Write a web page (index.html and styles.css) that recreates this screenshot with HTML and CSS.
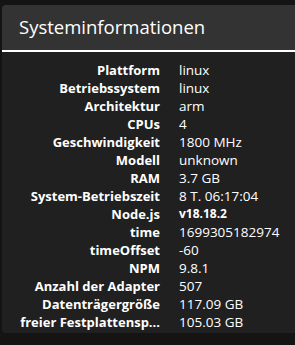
FILE: index.html
```html
<!DOCTYPE html>
<html lang="de">
<head>
  <meta charset="UTF-8" />
  <title>Systeminformationen</title>
  <link rel="stylesheet" href="styles.css">
</head>
<body>
  <div class="dialog">
    <div class="dialog-title">Systeminformationen</div>
    <div class="info-table">
      <div class="row"><span class="label">Plattform</span><span class="value">linux</span></div>
      <div class="row"><span class="label">Betriebssystem</span><span class="value">linux</span></div>
      <div class="row"><span class="label">Architektur</span><span class="value">arm</span></div>
      <div class="row"><span class="label">CPUs</span><span class="value">4</span></div>
      <div class="row"><span class="label">Geschwindigkeit</span><span class="value">1800 MHz</span></div>
      <div class="row"><span class="label">Modell</span><span class="value">unknown</span></div>
      <div class="row"><span class="label">RAM</span><span class="value">3.7 GB</span></div>
      <div class="row"><span class="label">System-Betriebszeit</span><span class="value">8 T. 06:17:04</span></div>
      <div class="row"><span class="label">Node.js</span><span class="value bold">v18.18.2</span></div>
      <div class="row"><span class="label">time</span><span class="value">1699305182974</span></div>
      <div class="row"><span class="label">timeOffset</span><span class="value">-60</span></div>
      <div class="row"><span class="label">NPM</span><span class="value">9.8.1</span></div>
      <div class="row"><span class="label">Anzahl der Adapter</span><span class="value">507</span></div>
      <div class="row"><span class="label">Datenträgergröße</span><span class="value">117.09 GB</span></div>
      <div class="row"><span class="label">freier Festplattensp...</span><span class="value">105.03 GB</span></div>
    </div>
  </div>
</body>
</html>
```

FILE: styles.css
```css
html, body {
  margin: 0;
  height: 100%;
  overflow: hidden;
}
body {
  background-color: #141414;
  font-family: 'Open Sans', sans-serif;
  color: #fff;
  padding: 5px 0 0 2px;
  box-sizing: border-box;
}
.dialog {
  background-color: #202020;
  border-radius: 4px 0 0 4px;
  overflow: hidden;
}
.dialog-title {
  height: 45px;
  line-height: 44px;
  background-color: #333;
  border-bottom: 2px solid #fff;
  padding-left: 17px;
  font-size: 18.5px;
}
.info-table {
  padding: 9px 0 2px;
}
.row {
  display: flex;
  height: 18px;
  line-height: 18px;
  font-size: 13px;
}
.label {
  width: 146px;
  margin-left: 12px;
  text-align: right;
  font-weight: bold;
  white-space: nowrap;
}
.value {
  margin-left: 19px;
  white-space: nowrap;
  font-size: 13.5px;
}
.value.bold {
  font-weight: bold;
  font-size: 12px;
}
```
